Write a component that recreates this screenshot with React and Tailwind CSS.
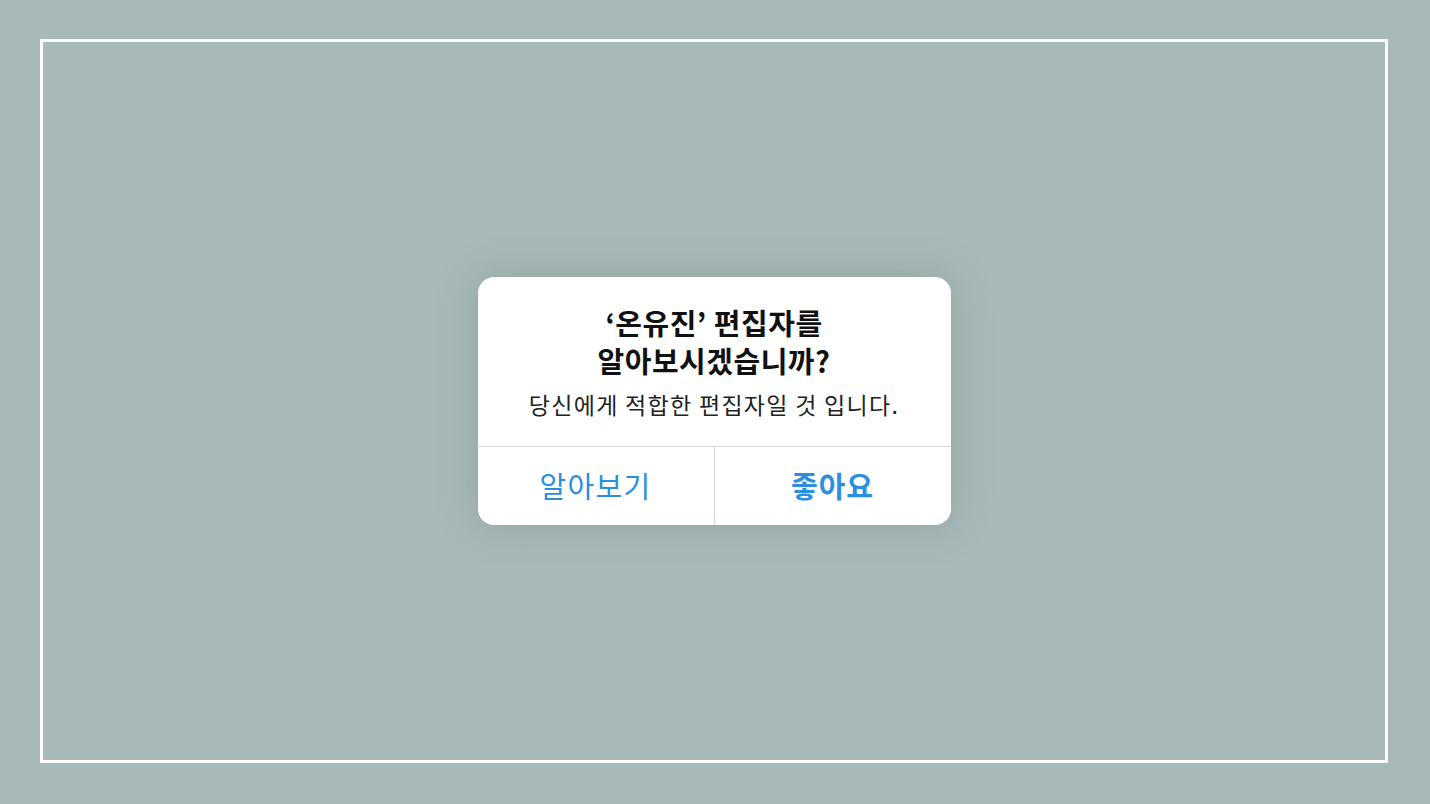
export default function App() {
  const font = { fontFamily: '"Noto Sans CJK KR", "Noto Sans", sans-serif' };
  return (
    <div className="w-[1430px] h-[804px] bg-[#a8b9b9] overflow-hidden pt-[39px] pl-[40px]" style={font}>
      <div className="w-[1348px] h-[724px] border-[3px] border-white flex items-center justify-center">
        <div className="w-[473px] h-[248px] bg-white rounded-[16px] flex flex-col shadow-[0_0_40px_rgba(80,100,100,0.25)] overflow-hidden">
          <div className="h-[170px] flex flex-col items-center pt-[26px] border-b border-[#d9d9d9]">
            <div className="text-[29px] font-bold leading-[38px] text-[#111] text-center tracking-[0.5px]">
              ‘온유진’ 편집자를<br />알아보시겠습니까?
            </div>
            <div className="text-[23px] leading-[30px] mt-[10px] text-[#222] tracking-[1.3px]">
              당신에게 적합한 편집자일 것 입니다.
            </div>
          </div>
          <div className="flex flex-1">
            <div className="flex-1 flex items-center justify-center text-[29px] text-[#2b8fe0] border-r border-[#d9d9d9] tracking-[1.3px]">
              알아보기
            </div>
            <div className="flex-1 flex items-center justify-center text-[29px] font-bold text-[#2b8fe0] tracking-[1px]">
              좋아요
            </div>
          </div>
        </div>
      </div>
    </div>
  );
}
